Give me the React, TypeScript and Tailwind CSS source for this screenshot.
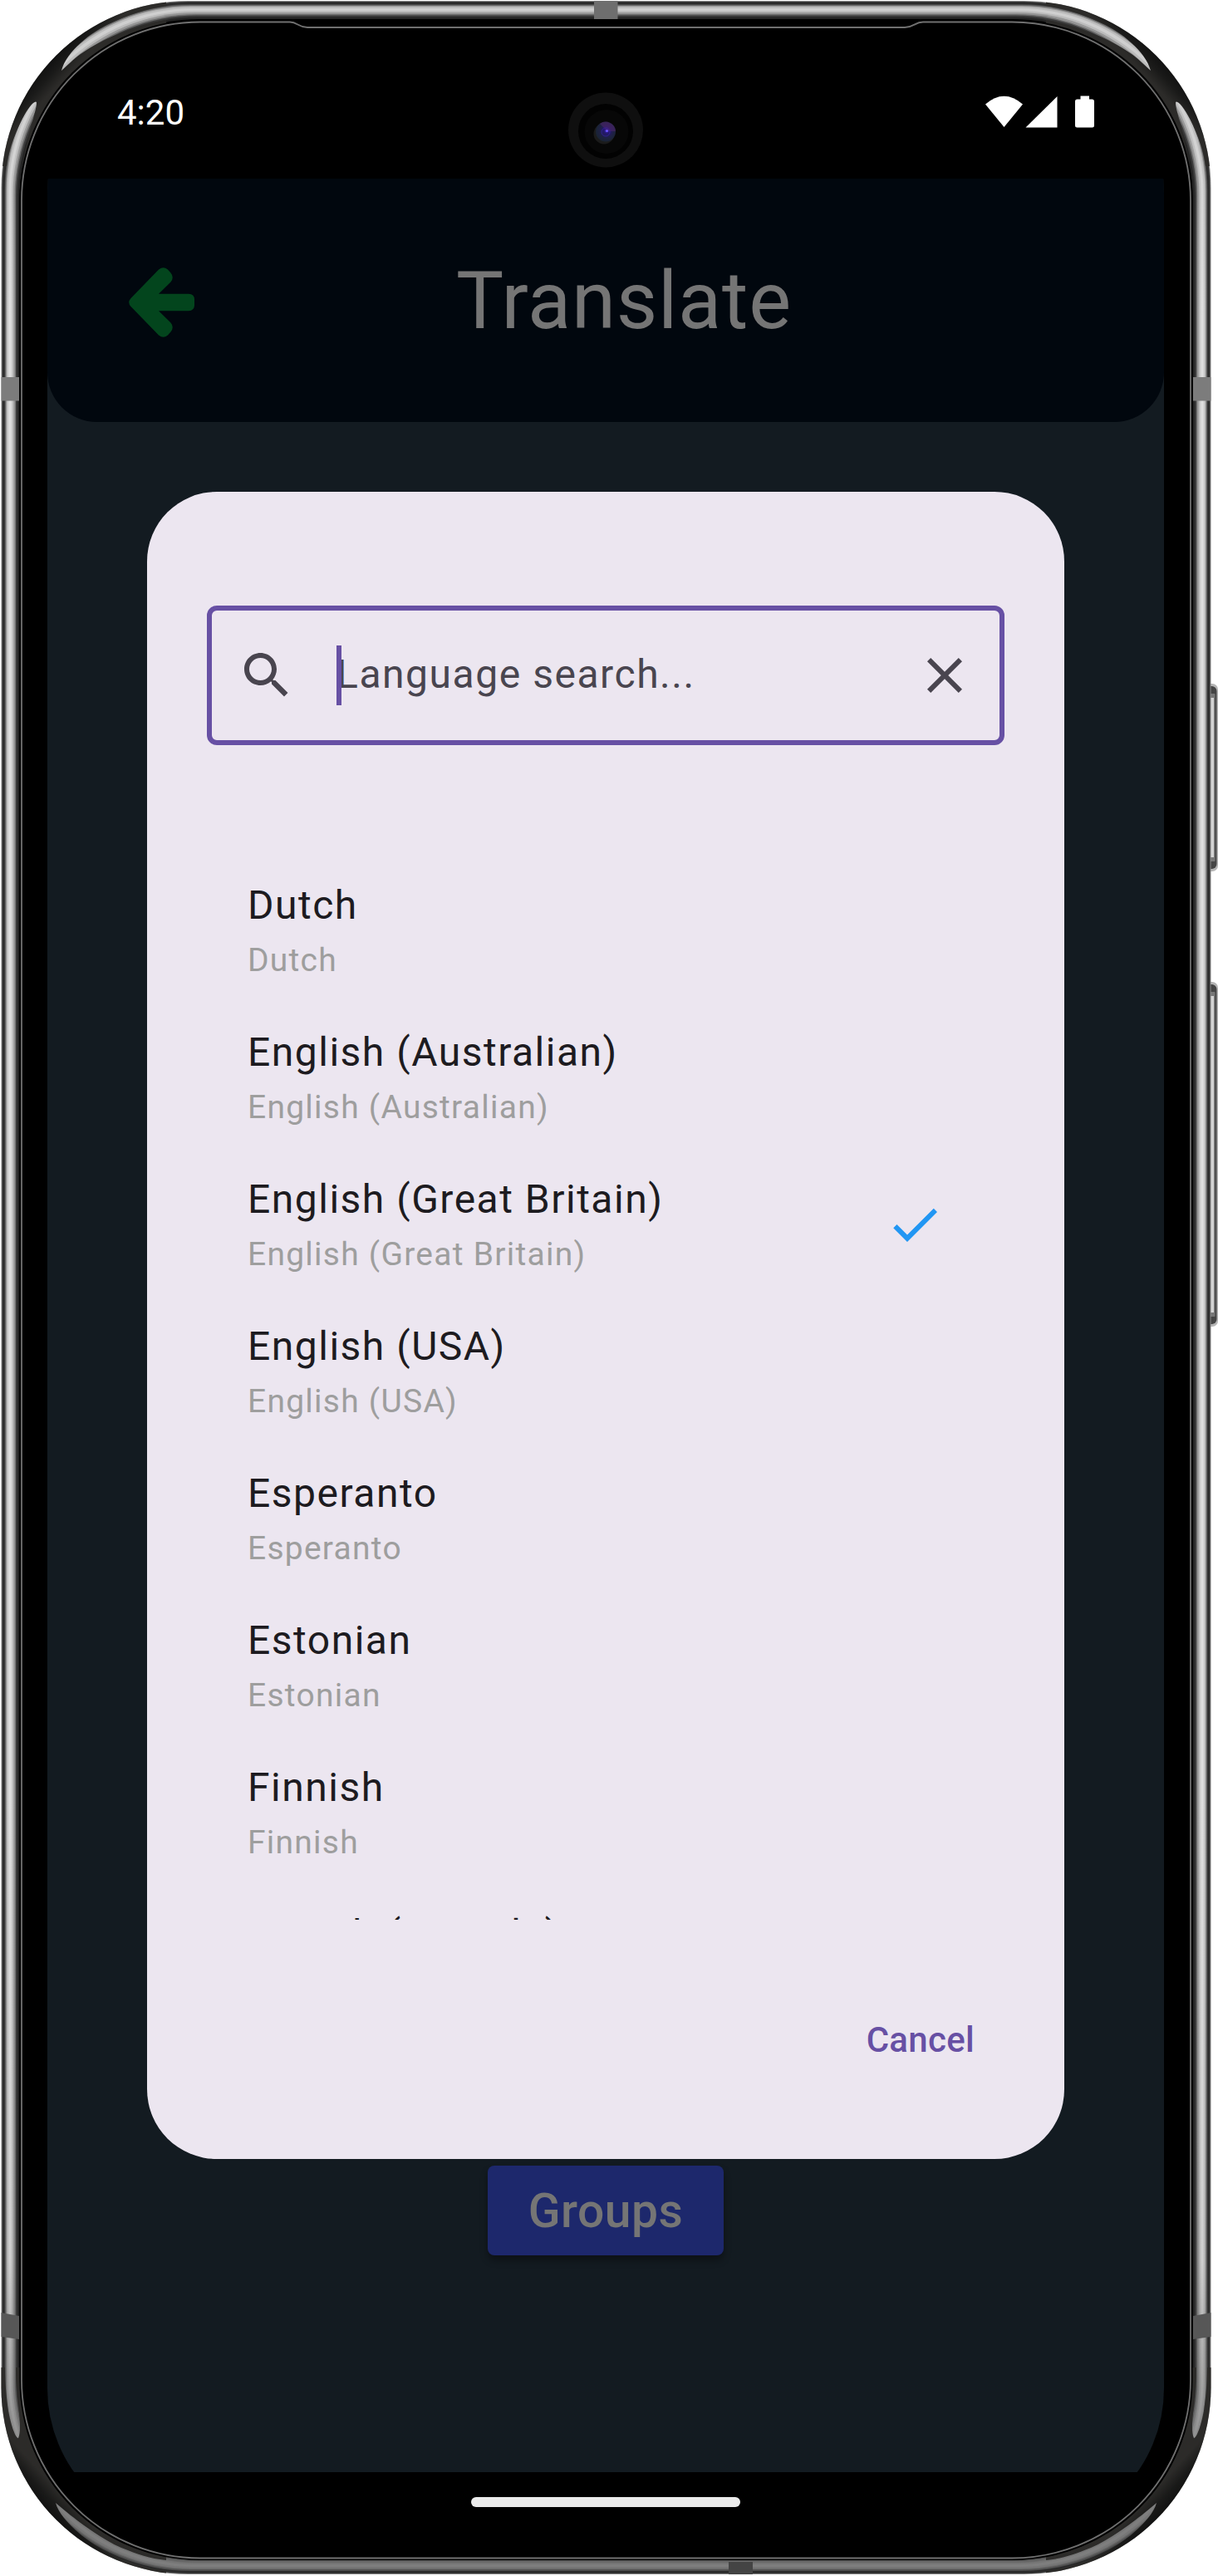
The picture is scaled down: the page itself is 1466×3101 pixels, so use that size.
const languages = [
  "Dutch",
  "English (Australian)",
  "English (Great Britain)",
  "English (USA)",
  "Esperanto",
  "Estonian",
  "Finnish",
  "French (Canada)",
];

/* Each ring of the metal frame: distance from the outer edge and its tone. */
const rings = [
  { d: 0, c: "#8a8a8a" },
  { d: 1, c: "#303030" },
  { d: 3, c: "#262626" },
  { d: 4, c: "#4a4a4a" },
  { d: 5, c: "url(#m3)" },
  { d: 6, c: "url(#m2)" },
  { d: 7, c: "url(#m1)" },
  { d: 9, c: "url(#m0)" },
  { d: 12, c: "url(#m1)" },
  { d: 14, c: "url(#m2)" },
  { d: 16, c: "url(#m3)" },
  { d: 17.5, c: "#3a3a3a" },
  { d: 19.5, c: "#242424" },
  { d: 22, c: "#000000" },
];

const metal = [
  ["#cfcfcf", "#dedede", "#7e7e7e"],
  ["#bcbcbc", "#cccccc", "#767676"],
  ["#969696", "#a6a6a6", "#686868"],
  ["#6c6c6c", "#7a7a7a", "#555555"],
];

/* Dark reflection at a corner, with two tapering highlights left open. */
function UpperShade() {
  return (
    <path
      fillRule="evenodd"
      d="M0 0 H200 V200 H0 Z M200 7 C176 11 154 18 133 28 C110 38 80 62 74 85 C84 76 92 68 100 63 C112 55 126 47 140 42 C160 33 180 27 200 24 Z M8 200 C10 184 16 165 27 143 C34 129 42 120 44 123 C44 130 41 138 40 143 C36 155 30 180 27 200 Z"
      fill="url(#shade)"
    />
  );
}

function LowerShade() {
  return (
    <path
      fillRule="evenodd"
      d="M0 0 H200 V250 H0 Z M200 5 C172 9 152 16 132 26 C110 36 72 66 67 87 C80 76 90 68 101 60 C115 50 130 40 146 33 C166 25 180 20 200 18 Z M6 250 C6 230 8 212 10 198 C13 182 18 166 22 165 C25 172 24 184 23 195 C21 212 19 230 19 250 Z"
      fill="url(#shade)"
    />
  );
}

function Chassis() {
  return (
    <svg className="absolute inset-0" width="1466" height="3101" viewBox="0 0 1466 3101" fill="none">
      <defs>
        {metal.map((m, i) => (
          <linearGradient key={i} id={"m" + i} x1="0" y1="0" x2="0" y2="1">
            <stop offset="0" stopColor={m[0]} />
            <stop offset="0.03" stopColor={m[0]} />
            <stop offset="0.12" stopColor={m[1]} />
            <stop offset="0.7" stopColor={m[1]} />
            <stop offset="0.88" stopColor={m[0]} />
            <stop offset="0.97" stopColor={m[2]} />
            <stop offset="1" stopColor={m[2]} />
          </linearGradient>
        ))}
        <linearGradient id="shade" x1="42" y1="80" x2="68" y2="104" gradientUnits="userSpaceOnUse">
          <stop offset="0" stopColor="#0a0a0a" />
          <stop offset="0.6" stopColor="#1a1a19" />
          <stop offset="1" stopColor="#2c2b29" />
        </linearGradient>
        <clipPath id="body">
          <rect x="1.5" y="1" width="1456" height="3098" rx="225" />
        </clipPath>
        <radialGradient id="lens" cx="0.55" cy="0.45" r="0.6">
          <stop offset="0" stopColor="#3c23b0" />
          <stop offset="0.25" stopColor="#23186a" />
          <stop offset="0.6" stopColor="#1e2142" />
          <stop offset="1" stopColor="#182430" />
        </radialGradient>
      </defs>

      {[[823, 226], [1182, 415]].map(([y, h]) => (
        <g key={y}>
          <rect x="1445" y={y} width="21" height={h} rx="7" fill="#b5b5b5" />
          <rect x="1445" y={y + 3} width="19.5" height={h - 6} rx="6" fill="#454545" />
          <rect x="1445" y={y + 12} width="17.5" height={h - 24} rx="1" fill="#777777" />
          <rect x="1445" y={y + 17} width="16" height={h - 34} fill="#d4d4d4" />
        </g>
      ))}

      {rings.map(({ d, c }) => (
        <rect
          key={d}
          x={1.5 + d}
          y={1 + d}
          width={1456 - 2 * d}
          height={3098 - 2 * d}
          rx={225 - 0.4 * d}
          fill={c}
        />
      ))}

      <g clipPath="url(#body)">
        <UpperShade />
        <g transform="translate(1459 0) scale(-1 1)">
          <UpperShade />
        </g>
        <g transform="translate(0 3100) scale(1 -1)">
          <LowerShade />
        </g>
        <g transform="translate(1459 3100) scale(-1 -1)">
          <LowerShade />
        </g>
      </g>

      <rect x="715" y="1" width="28.5" height="22" fill="#6e6e6e" />
      <rect x="1.5" y="454" width="21.5" height="28.5" fill="#7c7c7c" />
      <rect x="1436" y="454" width="21.5" height="28.5" fill="#7c7c7c" />
      <path d="M1.5 2784 L23 2788 V2816 L1.5 2813 Z" fill="#575757" />
      <path d="M1457.5 2784 L1436 2788 V2816 L1457.5 2813 Z" fill="#575757" />
      <rect x="877" y="3084" width="29" height="15" fill="#444444" />

      <rect x="23.500" y="24" width="1412" height="3058" rx="216" fill="#000000" />
      <path
        d="M241 26.5 H349 C358 26.5 359 33 370 33 H1089 C1100 33 1101 26.5 1111 26.5 H1218 A215 215 0 0 1 1433 241.5 V2864.5 A215 215 0 0 1 1218 3079.5 H241 A215 215 0 0 1 26 2864.5 V241.5 A215 215 0 0 1 241 26.5 Z"
        fill="#000000"
        stroke="#707070"
        strokeWidth="1.8"
      />

      <circle cx="729" cy="156.5" r="45" fill="#0f0f0f" />
      <circle cx="729" cy="158" r="33" fill="#020202" />
      <circle cx="730" cy="158.5" r="26.5" fill="#070707" />
      <circle cx="727" cy="161" r="12.5" fill="#1b1b1b" />
      <circle cx="729" cy="158.5" r="12" fill="url(#lens)" />
      <path d="M722 149 A12 12 0 0 1 741 158 L731 158 Z" fill="#4d2469" opacity="0.6" />
      <circle cx="729" cy="159" r="5" stroke="#3a22b0" strokeWidth="1" opacity="0.6" />
      <circle cx="730.5" cy="157.5" r="1.6" fill="#6b55ff" />
    </svg>
  );
}

function StatusBar() {
  return (
    <div className="flex h-[157px] shrink-0 items-start justify-between pr-[84px] pl-[84px]">
      <span className="mt-[53px] text-[42px] leading-[50px] text-white">4:20</span>
      <svg className="mt-[57px]" width="132" height="40" viewBox="0 0 132 40" fill="#ffffff">
        <path d="M1 10.5 Q23.5 -9 46 10.5 L23.5 38 Z" />
        <path d="M49.5 38.5 L87.5 1 V38.5 Z" />
        <path d="M115.5 0.5 H126 V4.5 H129.5 Q132 4.5 132 7 V36 Q132 38.5 129.5 38.5 H111.5 Q109 38.5 109 36 V7 Q109 4.5 111.5 4.5 H115.5 Z" />
      </svg>
    </div>
  );
}

function LanguageDialog() {
  return (
    <section className="flex h-[2007px] w-[1104px] shrink-0 flex-col rounded-[84px] bg-[#ece6f0] px-[72px] pt-[137px]">
      <div className="flex h-[168px] shrink-0 items-center rounded-[12px] border-[6px] border-[#6750a4] px-[30px]">
        <svg width="72" height="72" viewBox="0 0 24 24" fill="#49454f">
          <path d="M15.5 14h-.79l-.28-.27C15.41 12.59 16 11.11 16 9.5 16 5.91 13.09 3 9.5 3S3 5.91 3 9.5 5.91 16 9.5 16c1.61 0 3.09-.59 4.23-1.57l.27.28v.79l5 4.99L20.49 19l-4.99-5zm-6 0C7.01 14 5 11.99 5 9.5S7.01 5 9.5 5 14 7.01 14 9.5 11.99 14 9.5 14z" />
        </svg>
        <div className="relative ml-[48px] flex-1">
          <span className="block pb-[2px] text-[48px] leading-[70px] tracking-[1.54px] text-[#49454f]">
            Language search...
          </span>
          <span className="absolute top-0 left-0 h-[72px] w-[6px] bg-[#6750a4]" />
        </div>
        <svg width="72" height="72" viewBox="0 0 24 24" fill="#49454f">
          <path d="M19 6.41 17.59 5 12 10.59 6.41 5 5 6.41 10.59 12 5 17.59 6.41 19 12 13.41 17.59 19 19 17.59 13.41 12z" />
        </svg>
      </div>

      <ul className="mt-[134px] h-[1280px] shrink-0 overflow-hidden pr-[48px] pl-[49px]">
        {languages.map((name) => (
          <li key={name} className="flex h-[177px] items-center justify-between pr-[24px]">
            <div>
              <div className="text-[48px] leading-[72px] tracking-[1.5px] text-[#1d1b20]">{name}</div>
              <div className="text-[39px] leading-[60px] tracking-[1.25px] text-[#9e9e9e]">{name}</div>
            </div>
            {name === "English (Great Britain)" && (
              <svg width="72" height="72" viewBox="0 0 24 24" fill="#2196f3">
                <path d="M9 16.17 4.83 12l-1.42 1.41L9 19 21 7l-1.41-1.41z" />
              </svg>
            )}
          </li>
        ))}
      </ul>

      <div className="flex justify-end pt-[115px] pr-[36px]">
        <button className="text-[42px] leading-[60px] font-medium tracking-[0.3px] text-[#6750a4]">Cancel</button>
      </div>
    </section>
  );
}

export default function App() {
  return (
    <div className="relative h-[3101px] w-[1466px] overflow-hidden bg-white font-['Roboto',sans-serif]">
      <Chassis />
      <div className="relative pt-[58px] pl-[57px]">
        <div className="flex h-[2992px] w-[1344px] flex-col overflow-hidden rounded-[175px]">
          <StatusBar />
          <main className="flex h-[2761px] shrink-0 flex-col bg-[#131b21]">
            <header className="flex h-[293px] shrink-0 items-center rounded-b-[60px] bg-[#01070e] pl-[98px]">
              <svg className="mt-[4px]" width="79" height="84" viewBox="0 0 79 84">
                <path
                  d="M36 2.5 Q41.5 -2 47 2.500 L50.500 6.500 Q55 12 50.500 17.500 L36 31.700 H72 Q79 32 79 38.500 V45.500 Q79 52 72 52.300 H36 L50.500 66.500 Q55 72 50.500 77.500 L47 81.500 Q41.500 86 36 81.500 L2.500 47 Q-2 42 2.500 37 Z"
                  fill="#03451d"
                />
              </svg>
              <h1 className="ml-[315px] text-[96px] leading-[112px] tracking-[0.75px] text-[#757575]">Translate</h1>
            </header>
            <div className="flex flex-1 flex-col items-center gap-[8px] pt-[84px]">
              <LanguageDialog />
              <button className="h-[108px] w-[284px] rounded-[8px] bg-[#1d286c] pt-[2px] text-[57px] leading-[106px] font-medium tracking-[0.5px] text-[#757575] shadow-[0_6px_8px_rgba(0,0,0,0.35)]">
                Groups
              </button>
            </div>
          </main>
          <footer className="flex flex-1 justify-center pt-[30px]">
            <span className="h-[12px] w-[324px] rounded-full bg-[#ebebeb]" />
          </footer>
        </div>
      </div>
    </div>
  );
}
